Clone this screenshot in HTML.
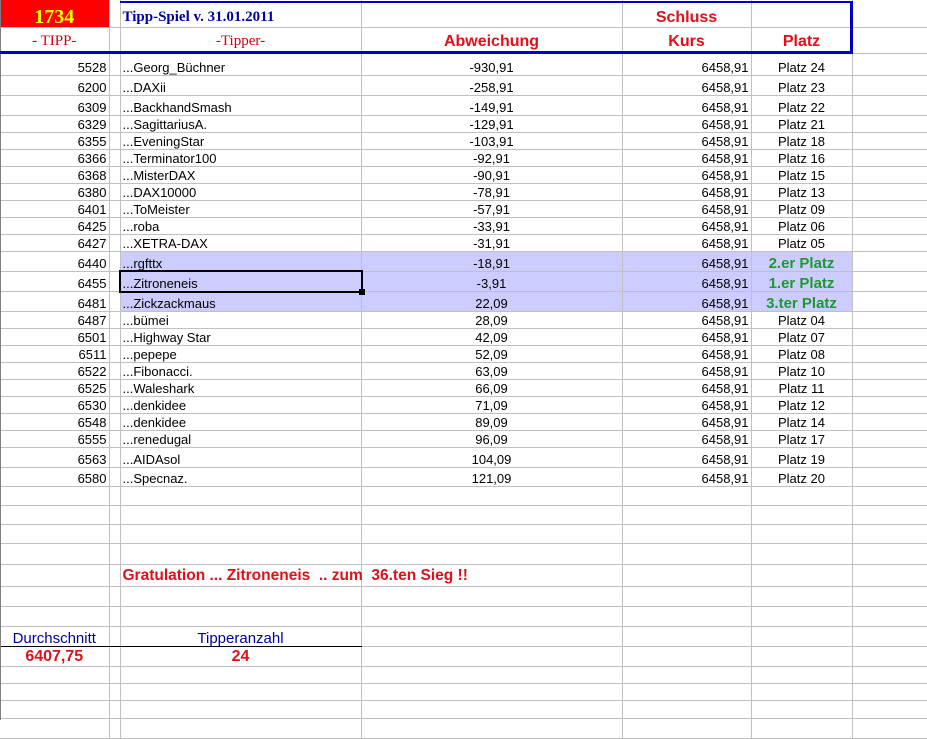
<!DOCTYPE html>
<html><head><meta charset="utf-8"><style>
body{margin:0;width:927px;height:720px;overflow:hidden;background:#fff;font-family:"Liberation Sans",Arial,sans-serif;position:relative}
table{border-collapse:collapse;table-layout:fixed;position:absolute;left:0;top:0;width:927px}
td{border-right:1px solid #c0c0c0;border-bottom:1px solid #c0c0c0;padding:0 2px;font-size:13px;white-space:nowrap;overflow:visible;vertical-align:bottom;line-height:15px;color:#000}
td.a{text-align:right}
td.d{text-align:center}
td.e{text-align:right}
td.f{text-align:center}
tr.h td.c,tr.h td.d,tr.h td.e,tr.h td.f{background:#ccccff}
.g{color:#1e9a2a;font-weight:bold;font-size:15px}
.r{color:#e0101a;font-weight:bold;font-size:16px}
tr.hd td{vertical-align:bottom;padding-bottom:1px}
tr.hd2 td{vertical-align:bottom;padding-bottom:4px}
.abs{position:absolute}
</style></head><body>
<table>
<colgroup><col style="width:109px"><col style="width:11px"><col style="width:241px"><col style="width:261px"><col style="width:129px"><col style="width:101px"><col style="width:75px"></colgroup>
<tr class="hd" style="height:27px"><td style="background:#f00;text-align:center;color:#ffff00;font-family:'Liberation Serif',serif;font-weight:bold;font-size:20px;padding-bottom:2px">1734</td><td></td><td style="color:#0000a0;font-family:'Liberation Serif',serif;font-weight:bold;font-size:15px;padding-bottom:2px">Tipp-Spiel v. 31.01.2011</td><td></td><td class="r" style="text-align:center;padding-bottom:2px">Schluss</td><td></td><td></td></tr>
<tr class="hd2" style="height:26px"><td style="text-align:center;color:#d00010;font-family:'Liberation Serif',serif;font-size:15px">- TIPP-</td><td></td><td style="text-align:center;color:#d00010;font-family:'Liberation Serif',serif;font-size:15px">-Tipper-</td><td class="r" style="text-align:center">Abweichung</td><td class="r" style="text-align:center">Kurs</td><td class="r" style="text-align:center">Platz</td><td></td></tr>
<tr style="height:22px"><td class="a">5528</td><td></td><td>...Georg_Büchner</td><td class="d">-930,91</td><td class="e">6458,91</td><td class="f">Platz 24</td><td></td></tr>
<tr style="height:20px"><td class="a">6200</td><td></td><td>...DAXii</td><td class="d">-258,91</td><td class="e">6458,91</td><td class="f">Platz 23</td><td></td></tr>
<tr style="height:20px"><td class="a">6309</td><td></td><td>...BackhandSmash</td><td class="d">-149,91</td><td class="e">6458,91</td><td class="f">Platz 22</td><td></td></tr>
<tr style="height:17px"><td class="a">6329</td><td></td><td>...SagittariusA.</td><td class="d">-129,91</td><td class="e">6458,91</td><td class="f">Platz 21</td><td></td></tr>
<tr style="height:17px"><td class="a">6355</td><td></td><td>...EveningStar</td><td class="d">-103,91</td><td class="e">6458,91</td><td class="f">Platz 18</td><td></td></tr>
<tr style="height:17px"><td class="a">6366</td><td></td><td>...Terminator100</td><td class="d">-92,91</td><td class="e">6458,91</td><td class="f">Platz 16</td><td></td></tr>
<tr style="height:17px"><td class="a">6368</td><td></td><td>...MisterDAX</td><td class="d">-90,91</td><td class="e">6458,91</td><td class="f">Platz 15</td><td></td></tr>
<tr style="height:17px"><td class="a">6380</td><td></td><td>...DAX10000</td><td class="d">-78,91</td><td class="e">6458,91</td><td class="f">Platz 13</td><td></td></tr>
<tr style="height:17px"><td class="a">6401</td><td></td><td>...ToMeister</td><td class="d">-57,91</td><td class="e">6458,91</td><td class="f">Platz 09</td><td></td></tr>
<tr style="height:17px"><td class="a">6425</td><td></td><td>...roba</td><td class="d">-33,91</td><td class="e">6458,91</td><td class="f">Platz 06</td><td></td></tr>
<tr style="height:17px"><td class="a">6427</td><td></td><td>...XETRA-DAX</td><td class="d">-31,91</td><td class="e">6458,91</td><td class="f">Platz 05</td><td></td></tr>
<tr class="h" style="height:20px"><td class="a">6440</td><td></td><td class="c">...rgfttx</td><td class="d">-18,91</td><td class="e">6458,91</td><td class="f g">2.er Platz</td><td></td></tr>
<tr class="h" style="height:20px"><td class="a">6455</td><td></td><td class="c">...Zitroneneis</td><td class="d">-3,91</td><td class="e">6458,91</td><td class="f g">1.er Platz</td><td></td></tr>
<tr class="h" style="height:20px"><td class="a">6481</td><td></td><td class="c">...Zickzackmaus</td><td class="d">22,09</td><td class="e">6458,91</td><td class="f g">3.ter Platz</td><td></td></tr>
<tr style="height:17px"><td class="a">6487</td><td></td><td>...bümei</td><td class="d">28,09</td><td class="e">6458,91</td><td class="f">Platz 04</td><td></td></tr>
<tr style="height:17px"><td class="a">6501</td><td></td><td>...Highway Star</td><td class="d">42,09</td><td class="e">6458,91</td><td class="f">Platz 07</td><td></td></tr>
<tr style="height:17px"><td class="a">6511</td><td></td><td>...pepepe</td><td class="d">52,09</td><td class="e">6458,91</td><td class="f">Platz 08</td><td></td></tr>
<tr style="height:17px"><td class="a">6522</td><td></td><td>...Fibonacci.</td><td class="d">63,09</td><td class="e">6458,91</td><td class="f">Platz 10</td><td></td></tr>
<tr style="height:17px"><td class="a">6525</td><td></td><td>...Waleshark</td><td class="d">66,09</td><td class="e">6458,91</td><td class="f">Platz 11</td><td></td></tr>
<tr style="height:17px"><td class="a">6530</td><td></td><td>...denkidee</td><td class="d">71,09</td><td class="e">6458,91</td><td class="f">Platz 12</td><td></td></tr>
<tr style="height:17px"><td class="a">6548</td><td></td><td>...denkidee</td><td class="d">89,09</td><td class="e">6458,91</td><td class="f">Platz 14</td><td></td></tr>
<tr style="height:17px"><td class="a">6555</td><td></td><td>...renedugal</td><td class="d">96,09</td><td class="e">6458,91</td><td class="f">Platz 17</td><td></td></tr>
<tr style="height:20px"><td class="a">6563</td><td></td><td>...AIDAsol</td><td class="d">104,09</td><td class="e">6458,91</td><td class="f">Platz 19</td><td></td></tr>
<tr style="height:19px"><td class="a">6580</td><td></td><td>...Specnaz.</td><td class="d">121,09</td><td class="e">6458,91</td><td class="f">Platz 20</td><td></td></tr>
<tr style="height:19px"><td></td><td></td><td></td><td></td><td></td><td></td><td></td></tr>
<tr style="height:19px"><td></td><td></td><td></td><td></td><td></td><td></td><td></td></tr>
<tr style="height:19px"><td></td><td></td><td></td><td></td><td></td><td></td><td></td></tr>
<tr style="height:21px"><td></td><td></td><td></td><td></td><td></td><td></td><td></td></tr>
<tr style="height:22px"><td></td><td></td><td style="vertical-align:middle"><span class="r" style="font-size:15.5px">Gratulation ... Zitroneneis &nbsp;.. zum &nbsp;36.ten Sieg !!</span></td><td></td><td></td><td></td><td></td></tr>
<tr style="height:20px"><td></td><td></td><td></td><td></td><td></td><td></td><td></td></tr>
<tr style="height:20px"><td></td><td></td><td></td><td></td><td></td><td></td><td></td></tr>
<tr style="height:20px"><td style="color:#0000a0;font-size:15px;text-align:center;border-bottom:1px solid #000">Durchschnitt</td><td style="border-bottom:1px solid #000"></td><td style="color:#0000a0;font-size:15px;text-align:center;border-bottom:1px solid #000">Tipperanzahl</td><td></td><td></td><td></td><td></td></tr>
<tr style="height:20px"><td class="r" style="text-align:center;vertical-align:middle">6407,75</td><td></td><td class="r" style="text-align:center;vertical-align:middle">24</td><td></td><td></td><td></td><td></td></tr>
<tr style="height:17px"><td></td><td></td><td></td><td></td><td></td><td></td><td></td></tr>
<tr style="height:17px"><td></td><td></td><td></td><td></td><td></td><td></td><td></td></tr>
<tr style="height:18px"><td></td><td></td><td></td><td></td><td></td><td></td><td></td></tr>
<tr style="height:20px"><td></td><td></td><td></td><td></td><td></td><td></td><td></td></tr>
</table>
<div class="abs" style="left:0;top:0;width:1px;height:720px;background:#808080"></div>
<div class="abs" style="left:120px;top:1px;width:730px;height:2px;background:#0000cc"></div>
<div class="abs" style="left:850px;top:1px;width:3px;height:53px;background:#0000cc"></div>
<div class="abs" style="left:0;top:51px;width:853px;height:3px;background:#0000cc"></div>
<div class="abs" style="left:119px;top:270px;width:240px;height:19px;border:2px solid #000"></div>
<div class="abs" style="left:359px;top:289px;width:6px;height:6px;background:#000"></div>
</body></html>
